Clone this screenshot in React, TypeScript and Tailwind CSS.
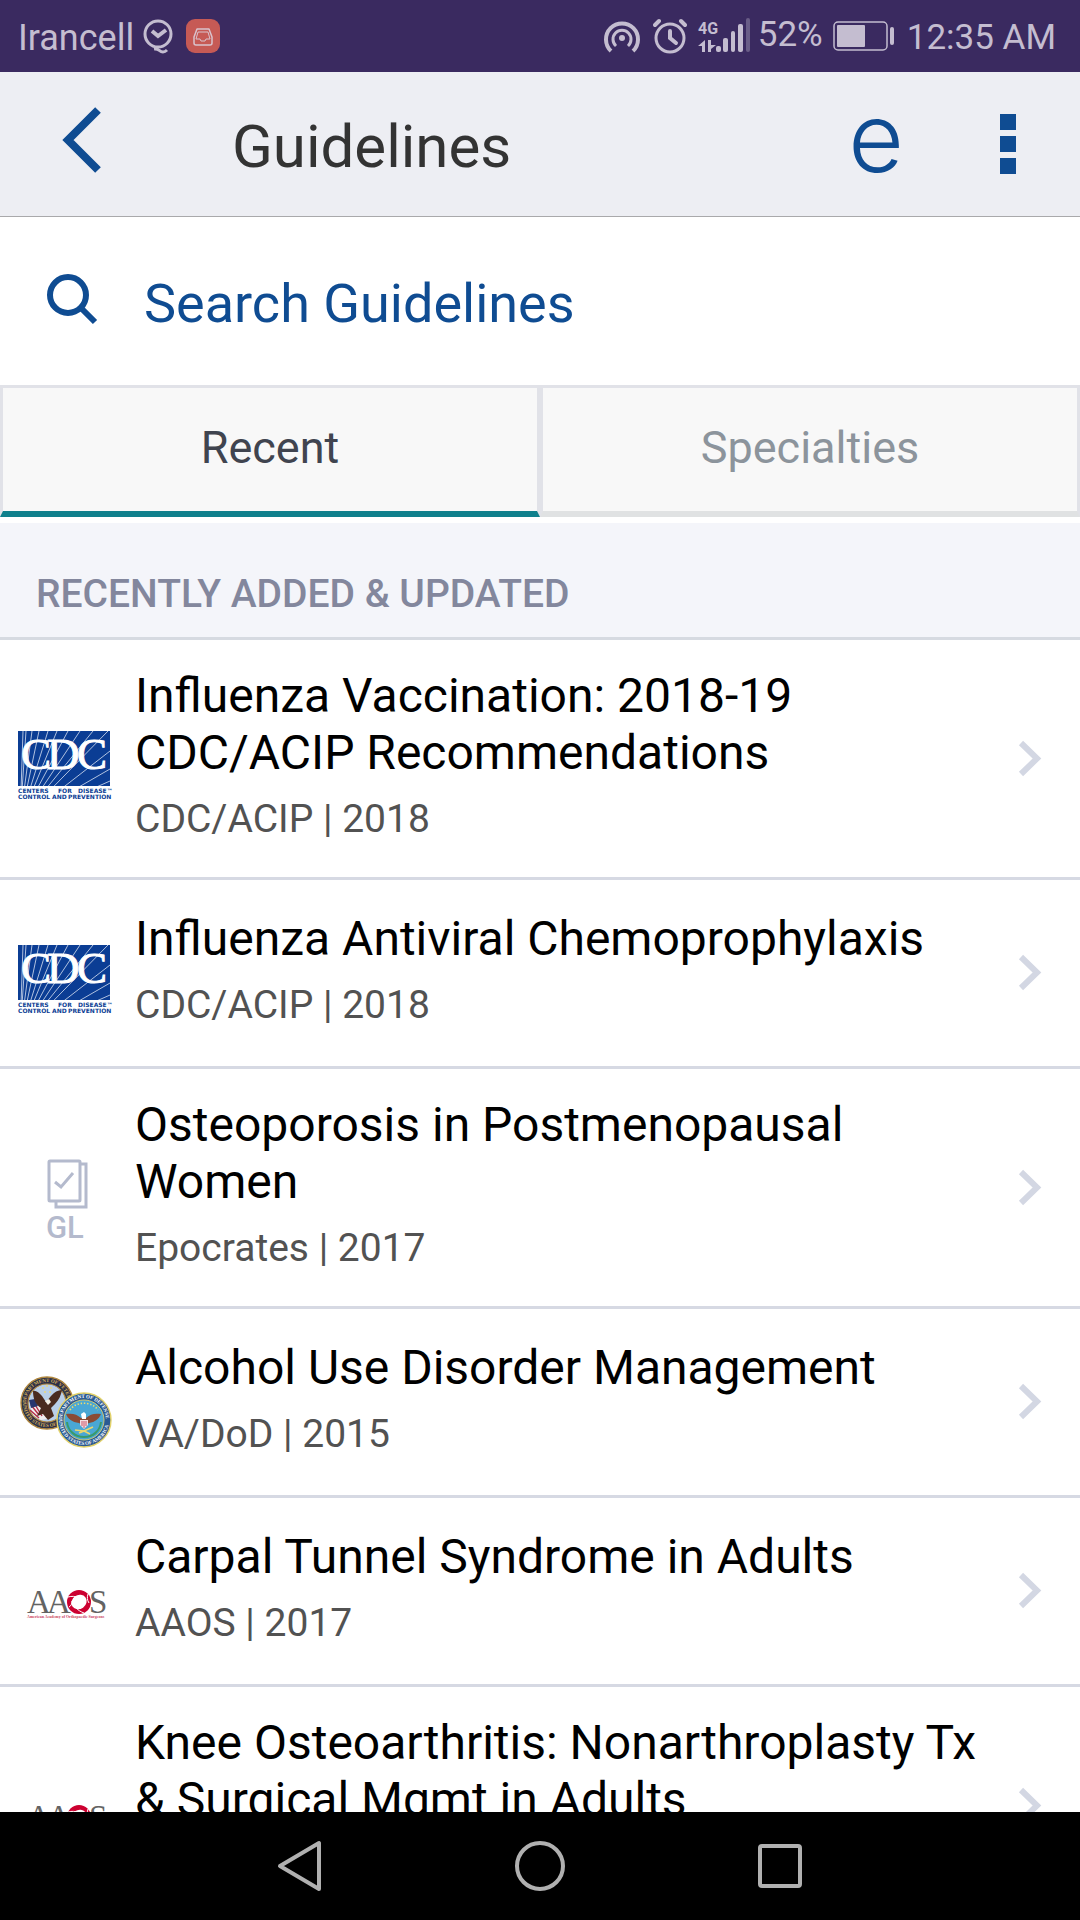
import { useState } from 'react';
import type { ReactNode } from 'react';

type Guideline = {
  title: string;
  source: string;
  year: number;
  logo: ReactNode;
};

const CdcLogo = () => (
  <svg viewBox="0 0 96 96" className="size-24 overflow-visible" role="img" aria-label="CDC">
    <defs>
      <clipPath id="cdc-box">
        <rect x="0" y="10" width="92" height="55" />
      </clipPath>
    </defs>
    <rect x="0" y="10" width="92" height="55" fill="#0b3d94" />
    <g clipPath="url(#cdc-box)" stroke="#c3d0e8" strokeWidth="0.9">
      {[5, 8, 14, 21, 30, 39, 50, 62, 75, 90].map((x) => (
        <line key={x} x1="2" y1="100" x2={x} y2="10" />
      ))}
      {[30, 48, 60].map((y) => (
        <line key={y} x1="2" y1="100" x2="92" y2={y} />
      ))}
    </g>
    <g
      fill="#fff"
      stroke="#fff"
      strokeWidth="1"
      fontFamily="'Liberation Serif', serif"
      fontSize="45"
    >
      <text x="3" y="48">C</text>
      <text x="29" y="48">D</text>
      <text x="59" y="48">C</text>
    </g>
    <g
      fill="#0b3d94"
      fontFamily="'DejaVu Sans', sans-serif"
      fontWeight="700"
      fontSize="6"
    >
      <text x="0" y="72">CENTERS</text>
      <text x="40" y="72">FOR</text>
      <text x="60" y="72">DISEASE™</text>
      <text x="0" y="78">CONTROL</text>
      <text x="34" y="78">AND</text>
      <text x="50" y="78">PREVENTION</text>
    </g>
  </svg>
);

const GlLogo = () => (
  <svg viewBox="0 0 96 96" className="size-24 overflow-visible" role="img" aria-label="GL">
    <g fill="none" stroke="#b4bacd" strokeWidth="3">
      <rect x="31" y="11" width="31" height="40" rx="1" />
      <path d="M63 14h5v43H38v-5" />
      <path d="M37 32l6 5 12-14" />
    </g>
    <text
      x="28"
      y="88"
      fill="#b4bacd"
      fontFamily="Roboto, sans-serif"
      fontWeight="500"
      fontSize="31"
    >
      GL
    </text>
  </svg>
);

const VaDodLogo = () => (
  <svg viewBox="0 0 96 96" className="size-24 overflow-visible" role="img" aria-label="VA/DoD">
    <defs>
      <path id="va-top" d="M8 39a21 21 0 0 1 42 0" />
      <path id="va-bottom" d="M5 39a24 24 0 0 0 48 0" />
      <path id="dod-top" d="M44 56a22 22 0 0 1 44 0" />
      <path id="dod-bottom" d="M41 56a25 25 0 0 0 50 0" />
    </defs>
    <circle cx="29" cy="39" r="26" fill="#2c3048" stroke="#b1883f" strokeWidth="1.4" />
    <circle cx="29" cy="39" r="19" fill="#b9cfe9" stroke="#b1883f" strokeWidth="1.2" />
    <g fill="#d9b35a" fontFamily="'Liberation Serif', serif" fontWeight="700" fontSize="5">
      <text>
        <textPath href="#va-top">DEPARTMENT OF VETERANS</textPath>
      </text>
      <text>
        <textPath href="#va-bottom">UNITED STATES OF AMERICA</textPath>
      </text>
    </g>
    <path d="M11 38l9-1 2 6 9 7-2 5-6 1-8-5z" fill="#f1eef0" />
    <path d="M13 41l8 10M16 39l8 13M12 46l9 8" stroke="#b32d45" strokeWidth="1.4" />
    <path d="M11 36l6-1 3 7-7 2z" fill="#27366f" />
    <path
      d="M15 27c3-1 6 2 9 5l4 6 5-6c3-4 7-6 11-6-1 5-3 10-7 14l-4 4 3 8-6 4-5-6-6 2 4-8c-6-4-8-10-8-17z"
      fill="#4a2b20"
    />
    <path d="M27 37l4-2 2 3-3 3z" fill="#f4efe6" />
    <g fill="#e8d67e">
      <circle cx="25" cy="24" r="1" />
      <circle cx="29" cy="22" r="1" />
      <circle cx="33" cy="24" r="1" />
      <circle cx="27" cy="28" r="1" />
      <circle cx="32" cy="28" r="1" />
    </g>
    <circle cx="66" cy="56" r="27" fill="#2b5a93" stroke="#e3d269" strokeWidth="1.4" />
    <circle cx="66" cy="56" r="20" fill="#4aa7d4" stroke="#cfc875" strokeWidth="1" />
    <g fill="#fff" fontFamily="'Liberation Serif', serif" fontWeight="700" fontSize="5">
      <text>
        <textPath href="#dod-top">DEPARTMENT OF DEFENSE</textPath>
      </text>
      <text>
        <textPath href="#dod-bottom">UNITED STATES OF AMERICA</textPath>
      </text>
    </g>
    <path
      d="M52 46c6-9 22-9 28 0"
      fill="none"
      stroke="#f0dc6a"
      strokeWidth="1.6"
      strokeDasharray="1.4 1.8"
    />
    <path
      d="M49 58c1 9 8 15 17 15s16-6 17-15"
      fill="none"
      stroke="#3a9a6c"
      strokeWidth="2"
    />
    <path
      d="M48 50c6-1 11 0 15 4h5c4-4 9-5 15-4-2 5-6 8-12 9l-5 3-5-3c-7-1-11-4-13-9z"
      fill="#8a4b35"
    />
    <path d="M62 56h8v5l-4 4-4-4z" fill="#f3dfe3" />
    <path d="M64 57v5M66 57v7M68 57v5" stroke="#c2344c" strokeWidth="0.8" />
    <path d="M63 50l3-2 2 2v5h-4z" fill="#fff" />
    <path d="M57 66l9 1 9-4M61 69l5-2 6 3" stroke="#ecd86c" strokeWidth="1.6" fill="none" />
  </svg>
);

const AaosLogo = () => (
  <svg viewBox="0 0 96 96" className="size-24 overflow-visible" role="img" aria-label="AAOS">
    <g fill="#636363" fontFamily="'Liberation Serif', serif" fontSize="33">
      <text x="9" y="60">A</text>
      <text x="29" y="60">A</text>
      <text x="71" y="60">S</text>
    </g>
    <circle cx="61" cy="49" r="12" fill="#cc0030" />
    <ellipse cx="61" cy="49" rx="8" ry="7" fill="#fff" transform="rotate(-35 61 49)" />
    <path
      d="M50 44c4-1 7-1 10 1M70 41c-1 3-1 6 1 9M66 60c-3-1-6-3-8-5M51 54c2-1 3-3 3-6"
      fill="none"
      stroke="#fff"
      strokeWidth="1"
    />
    <text
      x="9"
      y="65"
      fill="#cc4463"
      fontFamily="'Liberation Serif', serif"
      fontWeight="700"
      fontSize="4"
    >
      American Academy of Orthopaedic Surgeons
    </text>
  </svg>
);

const guidelines: Guideline[] = [
  {
    title: 'Influenza Vaccination: 2018-19 CDC/ACIP Recommendations',
    source: 'CDC/ACIP',
    year: 2018,
    logo: <CdcLogo />,
  },
  {
    title: 'Influenza Antiviral Chemoprophylaxis',
    source: 'CDC/ACIP',
    year: 2018,
    logo: <CdcLogo />,
  },
  {
    title: 'Osteoporosis in Postmenopausal Women',
    source: 'Epocrates',
    year: 2017,
    logo: <GlLogo />,
  },
  {
    title: 'Alcohol Use Disorder Management',
    source: 'VA/DoD',
    year: 2015,
    logo: <VaDodLogo />,
  },
  {
    title: 'Carpal Tunnel Syndrome in Adults',
    source: 'AAOS',
    year: 2017,
    logo: <AaosLogo />,
  },
  {
    title: 'Knee Osteoarthritis: Nonarthroplasty Tx & Surgical Mgmt in Adults',
    source: 'AAOS',
    year: 2015,
    logo: <AaosLogo />,
  },
];

const StatusBar = () => (
  <div className="flex h-[72px] shrink-0 items-center justify-between bg-[#3a2a60] pl-[18px] pr-6 text-[#c4bdd0]">
    <div className="flex items-center">
      <span className="pt-[3px] text-[36px] leading-[42px]">Irancell</span>
      <svg viewBox="0 0 32 36" className="ml-2 h-9 w-8" fill="none" stroke="currentColor">
        <circle cx="16" cy="16" r="13" strokeWidth="3" />
        <path d="M10 13l6 5 8-6" strokeWidth="4" />
        <path d="M12 31c5-1 5 3 9 3 2 0 3-1 4-2" strokeWidth="3" />
      </svg>
      <svg viewBox="0 0 34 34" className="ml-3 size-[34px]" fill="none">
        <rect width="34" height="34" rx="9" fill="#c65a55" />
        <g stroke="#d9c3cd" strokeWidth="1.5" strokeLinejoin="round">
          <path d="M11 10h12l3 8v6q0 2-2 2H10q-2 0-2-2v-6z" />
          <path d="M12 13h10l2 7h-4l-1 2h-4l-1-2h-4z" strokeWidth="1" />
        </g>
      </svg>
    </div>
    <div className="flex items-center">
      <svg viewBox="0 0 38 36" className="h-9 w-[38px]" fill="none" stroke="currentColor">
        <circle cx="19" cy="20" r="3" fill="currentColor" stroke="none" />
        <path d="M8 33a16 16 0 1 1 22 0" strokeWidth="4" />
        <path d="M13 28a9 9 0 1 1 12 0" strokeWidth="3" />
      </svg>
      <svg
        viewBox="0 0 34 36"
        className="ml-3 h-9 w-[34px]"
        fill="none"
        stroke="currentColor"
        strokeWidth="3"
        strokeLinecap="round"
      >
        <circle cx="17" cy="20" r="14" />
        <path d="M17 13v7l6 5" strokeWidth="4" />
        <path d="M2 7l4-4M32 7l-4-4" strokeWidth="4" />
      </svg>
      <svg
        viewBox="0 0 54 36"
        className="ml-[11px] h-9 w-[54px] overflow-visible"
        fill="currentColor"
      >
        <text x="0" y="16" fontFamily="Roboto, sans-serif" fontWeight="700" fontSize="16">
          4G
        </text>
        <path d="M7 22v12H4v-6H0zM10 22v12h3v-3l5-4h-5v-5z" />
        <rect x="18" y="28" width="5" height="6" rx="2" />
        <rect x="25" y="20" width="5" height="14" rx="2" />
        <rect x="33" y="13" width="4" height="21" rx="2" />
        <rect x="40" y="6" width="5" height="28" rx="2" />
        <rect x="48" y="0" width="4" height="34" rx="2" opacity="0.35" />
      </svg>
      <span className="ml-1.5 pb-[3px] text-[35px] leading-[42px]">52%</span>
      <svg viewBox="0 0 62 30" className="ml-2.5 h-[30px] w-[62px]">
        <rect
          x="1"
          y="1"
          width="53"
          height="28"
          rx="4"
          fill="none"
          stroke="currentColor"
          strokeWidth="1.5"
        />
        <rect x="4" y="4" width="28" height="22" rx="1" fill="currentColor" />
        <rect x="57" y="6" width="4" height="18" rx="2" fill="currentColor" />
      </svg>
      <span className="ml-3 pt-[3px] text-[35px] leading-[42px]">12:35 AM</span>
    </div>
  </div>
);

const Header = () => (
  <header className="flex h-[145px] shrink-0 items-center border-b border-[#a9a9ab] bg-[#edeef3] text-[#0f4c92]">
    <button type="button" aria-label="Back" className="ml-15 cursor-pointer pb-2">
      <svg viewBox="0 0 44 68" className="h-[68px] w-11" fill="none" stroke="currentColor">
        <path d="M38 4L8 34l30 30" strokeWidth="8" />
      </svg>
    </button>
    <h1 className="ml-32 flex-1 pt-1.5 text-[60px] leading-[70px] text-[#333]">Guidelines</h1>
    <button
      type="button"
      aria-label="Epocrates home"
      className="cursor-pointer px-0.5 pb-[14px] font-['Inter',sans-serif] text-[96px] leading-[116px] font-light"
    >
      e
    </button>
    <button
      type="button"
      aria-label="More options"
      className="ml-[94px] mr-16 flex cursor-pointer flex-col gap-1.5"
    >
      <span className="size-4 bg-current" />
      <span className="size-4 bg-current" />
      <span className="size-4 bg-current" />
    </button>
  </header>
);

const SearchBar = () => (
  <label className="flex h-[168px] shrink-0 items-center bg-white pl-[45px] text-[#0f4c92]">
    <svg
      viewBox="0 0 54 54"
      className="mb-1 size-[54px] shrink-0"
      fill="none"
      stroke="currentColor"
      strokeWidth="6"
    >
      <circle cx="23" cy="23" r="18" />
      <path d="M36 36l14 14" />
    </svg>
    <input
      type="search"
      aria-label="Search Guidelines"
      placeholder="Search Guidelines"
      className="ml-[45px] w-full pt-1.5 text-[54px] leading-[64px] outline-none placeholder:text-[#0f4c92] placeholder:opacity-100"
    />
  </label>
);

const Tabs = () => {
  const [active, setActive] = useState('Recent');

  return (
    <div role="tablist" className="mb-1.5 grid shrink-0 grid-cols-2">
      {['Recent', 'Specialties'].map((tab) => (
        <button
          key={tab}
          type="button"
          role="tab"
          aria-selected={active === tab}
          onClick={() => setActive(tab)}
          className={`h-[132px] cursor-pointer border-[3px] border-b-6 border-[#e1e2e8] bg-[#f8f8f8] pb-1 text-[45px] leading-[52px] ${
            active === tab
              ? 'border-b-[#0f808c] text-[#40444f]'
              : 'border-b-[#e0e2e3] text-[#8c949c]'
          }`}
        >
          {tab}
        </button>
      ))}
    </div>
  );
};

const GuidelineRow = ({ title, source, year, logo }: Guideline) => (
  <li className="border-b-[3px] border-[#d6d9e3]">
    <a href="#guideline" className="flex min-h-[186px] items-center pl-[18px] pr-[38px]">
      <div className="mt-5 shrink-0">{logo}</div>
      <div className="ml-[21px] flex-1 pt-[27px] pb-[34px]">
        <h3 className="text-[48px] leading-[57px] text-black">{title}</h3>
        <p className="mt-[14px] text-[39px] leading-[48px] text-[#525252]">
          {source} | {year}
        </p>
      </div>
      <svg
        viewBox="0 0 24 38"
        className="ml-6 h-[38px] w-6 shrink-0"
        fill="none"
        stroke="#d3d7e3"
        strokeWidth="6"
      >
        <path d="M3 3l16 15.500L3 34" />
      </svg>
    </a>
  </li>
);

const NavBar = () => (
  <nav className="h-[108px] shrink-0 bg-black">
    <div className="mx-auto flex h-full w-2/3 text-[#b0b0b0]">
      <button type="button" aria-label="Back" className="flex flex-1 cursor-pointer items-center justify-center">
        <svg viewBox="0 0 52 52" className="size-13" fill="none" stroke="currentColor" strokeWidth="4" strokeLinejoin="round">
          <path d="M45 3v46L6 26z" />
        </svg>
      </button>
      <button type="button" aria-label="Home" className="flex flex-1 cursor-pointer items-center justify-center">
        <svg viewBox="0 0 52 52" className="size-13" fill="none" stroke="currentColor" strokeWidth="4">
          <circle cx="26" cy="26" r="23" />
        </svg>
      </button>
      <button type="button" aria-label="Recent apps" className="flex flex-1 cursor-pointer items-center justify-center">
        <svg viewBox="0 0 52 52" className="size-13" fill="none" stroke="currentColor" strokeWidth="4">
          <rect x="6" y="6" width="40" height="40" rx="2" />
        </svg>
      </button>
    </div>
  </nav>
);

const App = () => (
  <div className="flex h-screen flex-col bg-white font-['Roboto',sans-serif]">
    <StatusBar />
    <Header />
    <SearchBar />
    <Tabs />
    <main className="min-h-0 flex-1 overflow-y-auto [scrollbar-width:none]">
      <h2 className="border-b-[3px] border-[#d6dae1] bg-[#f4f5fa] pt-[47px] pb-[19px] pl-9 text-[39px] leading-[48px] font-medium text-[#83879d]">
        RECENTLY ADDED &amp; UPDATED
      </h2>
      <ul>
        {guidelines.map((item) => (
          <GuidelineRow key={item.title} {...item} />
        ))}
      </ul>
    </main>
    <NavBar />
  </div>
);

export default App;
